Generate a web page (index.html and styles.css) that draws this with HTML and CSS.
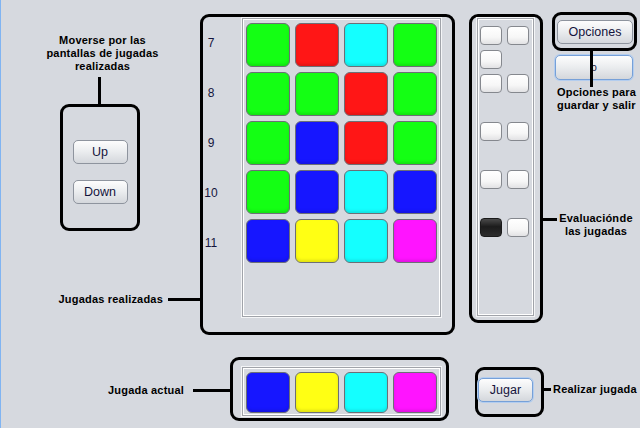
FILE: index.html
```html
<!DOCTYPE html>
<html lang="es">
<head>
  <meta charset="UTF-8">
  <title>Mastermind - Ayuda</title>
  <link rel="stylesheet" href="styles.css">
</head>
<body>

<div class="screen">
  <div class="top">
    <div class="nav-col">
      <p class="note note-nav">Moverse por las<br>pantallas de jugadas<br>realizadas</p>
      <div class="stem"></div>
      <div class="frame nav-frame">
        <button class="btn nav-btn">Up</button>
        <button class="btn nav-btn">Down</button>
      </div>
      <div class="callout callout-board">
        <span class="note">Jugadas realizadas</span>
        <span class="wire wire-board"></span>
      </div>
    </div>

    <div class="frame board">
      <div class="row-nums" id="rowNums"></div>
      <div class="panel board-panel" id="boardPanel">
        <!-- JS Render -->
      </div>
    </div>

    <div class="frame eval">
      <div class="panel eval-panel" id="evalPanel">
        <!-- JS Render -->
      </div>
    </div>

    <div class="side-col">
      <div class="frame menu-frame">
        <button class="btn menu-btn">Opciones</button>
      </div>
      <button class="btn focus-btn">o</button>
      <span class="menu-stem"></span>
      <p class="note menu-note">Opciones para<br>guardar y salir</p>
      <div class="callout callout-eval">
        <span class="wire wire-eval"></span>
        <p class="note eval-note"><span class="tight">Evaluación de</span><br>las jugadas</p>
      </div>
    </div>
  </div>

  <div class="bottom">
    <div class="callout callout-now">
      <span class="note">Jugada actual</span>
      <span class="wire wire-now"></span>
    </div>
    <div class="frame current">
      <div class="panel current-panel" id="currentPanel"></div>
    </div>
    <div class="frame play-frame">
      <button class="btn play-btn">Jugar</button>
    </div>
    <div class="callout callout-play">
      <span class="wire wire-play"></span>
      <span class="note">Realizar jugada</span>
    </div>
  </div>
</div>

<script>
  const plays = [
    { n: 7,  colors: ['green', 'red', 'cyan', 'green'],    hints: ['white', 'white', 'white'] },
    { n: 8,  colors: ['green', 'green', 'red', 'green'],   hints: ['white', 'white'] },
    { n: 9,  colors: ['green', 'blue', 'red', 'green'],    hints: ['white', 'white'] },
    { n: 10, colors: ['green', 'blue', 'cyan', 'blue'],    hints: ['white', 'white'] },
    { n: 11, colors: ['blue', 'yellow', 'cyan', 'magenta'], hints: ['black', 'white'] }
  ];
  const current = ['blue', 'yellow', 'cyan', 'magenta'];

  const nums = document.getElementById('rowNums');
  const board = document.getElementById('boardPanel');
  const evalPanel = document.getElementById('evalPanel');

  plays.forEach(p => {
    nums.innerHTML += `<span>${p.n}</span>`;
    p.colors.forEach(c => {
      board.innerHTML += `<div class="peg ${c}"></div>`;
    });
    const group = p.hints.map(h => `<div class="hint ${h}"></div>`).join('');
    evalPanel.innerHTML += `<div class="hint-group">${group}</div>`;
  });

  document.getElementById('currentPanel').innerHTML =
    current.map(c => `<div class="peg ${c}"></div>`).join('');
</script>

</body>
</html>
```

FILE: styles.css
```css
* { box-sizing: border-box; }
body { margin: 0; background: #d6d9df; font-family: "Liberation Sans", Arial, sans-serif; }

.screen {
  width: 640px;
  height: 428px;
  border-left: 1px solid #80b4f2;
  display: flex;
  flex-direction: column;
  overflow: hidden;
}

.top { display: flex; height: 340px; }

.note {
  margin: 0;
  font-size: 11px;
  font-weight: bold;
  line-height: 13px;
  letter-spacing: 0.2px;
  color: #000;
  white-space: nowrap;
}

.frame {
  border: 3px solid #000;
  border-radius: 9px;
}

.wire { height: 3px; background: #000; }

.callout { display: flex; align-items: center; }

.btn {
  font: 12.5px "Liberation Sans", Arial, sans-serif;
  color: #14143c;
  border: 1px solid #8e949e;
  border-radius: 5px;
  background: linear-gradient(#fdfdfd, #eceef0 45%, #d4d7dc);
  padding: 0;
}

/* left column */
.nav-col {
  width: 199px;
  display: flex;
  flex-direction: column;
  align-items: flex-start;
}

.note-nav {
  width: 199px;
  padding: 34px 0 0 4px;
  text-align: center;
}

.stem {
  width: 3px;
  height: 27px;
  background: #000;
  margin: 4px 0 0 97px;
}

.nav-frame {
  width: 80px;
  height: 127px;
  margin-left: 59px;
  padding-top: 33px;
  display: flex;
  flex-direction: column;
  align-items: center;
  gap: 16px;
}

.nav-btn { width: 55px; height: 24px; }

.callout-board {
  width: 199px;
  justify-content: flex-end;
  margin-top: 62px;
}

.wire-board { width: 32px; margin-left: 5px; }

/* board */
.board {
  width: 255px;
  height: 321px;
  margin-top: 14px;
  display: flex;
  align-items: flex-start;
}

.row-nums {
  width: 16px;
  margin-top: 1px;
  display: flex;
  flex-direction: column;
}

.row-nums span {
  height: 50px;
  line-height: 50px;
  text-align: center;
  font-size: 12px;
  color: #14143c;
}

.panel {
  border: 1px solid #a0a3a9;
  box-shadow: inset 0 0 0 1px #fff, 0 0 0 1px #f4f5f7;
}

.board-panel {
  width: 199px;
  height: 299px;
  margin: 1px 0 0 23px;
  padding: 4px 0 0 3px;
  display: grid;
  grid-template-columns: repeat(4, 44px);
  grid-auto-rows: 44px;
  gap: 5px;
  align-content: start;
}

.peg {
  border: 1px solid #6c6f76;
  border-radius: 6px;
  box-shadow: inset 0 -2px 3px rgba(0, 0, 0, 0.12);
}

.green   { background: #14ff14; }
.red     { background: #ff1616; }
.cyan    { background: #14ffff; }
.blue    { background: #1616ff; }
.yellow  { background: #ffff14; }
.magenta { background: #ff14ff; }

/* evaluation */
.eval {
  width: 74px;
  height: 309px;
  margin: 14px 0 0 14px;
}

.eval-panel {
  width: 57px;
  height: 298px;
  margin: 1px 0 0 5px;
  padding: 7px 0 0 2px;
}

.hint-group {
  height: 48px;
  display: grid;
  grid-template-columns: 22px 22px;
  grid-auto-rows: 19px;
  gap: 5px;
  align-content: start;
}

.hint {
  border: 1px solid #85888e;
  border-radius: 4px;
  background: linear-gradient(#fff, #f7f7f7 60%, #e2e2e4);
}

.hint.black {
  border-color: #1a1a1a;
  background: linear-gradient(#4a4a4a, #1c1c1c 45%, #2c2c2c);
}

/* right column */
.side-col {
  position: relative;
  width: 97px;
  display: flex;
  flex-direction: column;
  align-items: flex-start;
}

.menu-frame {
  width: 85px;
  height: 39px;
  margin: 12px 0 0 9px;
  padding: 5px 0 0 2px;
}

.menu-btn { width: 76px; height: 24px; }

.focus-btn,
.play-btn {
  border-color: #76a0d8;
  box-shadow: 0 0 0 1px #b3cdef;
}

.focus-btn {
  width: 78px;
  height: 25px;
  margin: 4px 0 0 12px;
  font-size: 10px;
}

.menu-stem {
  position: absolute;
  left: 47px;
  top: 51px;
  width: 3px;
  height: 36px;
  background: #000;
}

.menu-note { margin: 6px 0 0 14px; }

.callout-eval { align-items: flex-start; margin-top: 100px; }

.wire-eval { width: 14px; margin-top: 6px; }

.eval-note { width: 78px; text-align: center; }

.tight { word-spacing: -3px; }

/* bottom row */
.bottom { display: flex; height: 88px; align-items: flex-start; }

.callout-now {
  width: 229px;
  height: 64px;
  margin-top: 17px;
  padding-top: 3px;
  justify-content: flex-end;
}

.wire-now { width: 37px; margin-left: 9px; }

.current {
  width: 219px;
  height: 64px;
  margin-top: 17px;
}

.current-panel {
  width: 199px;
  height: 49px;
  margin: 7px 0 0 9px;
  padding: 4px 0 0 3px;
  display: grid;
  grid-template-columns: repeat(4, 44px);
  grid-auto-rows: 41px;
  gap: 5px;
}

.play-frame {
  width: 69px;
  height: 50px;
  margin: 27px 0 0 26px;
  padding-top: 8px;
}

.play-btn { width: 55px; height: 24px; }

.callout-play {
  height: 50px;
  margin-top: 27px;
  padding-bottom: 6px;
}

.wire-play { width: 7px; margin-right: 2px; }
```
